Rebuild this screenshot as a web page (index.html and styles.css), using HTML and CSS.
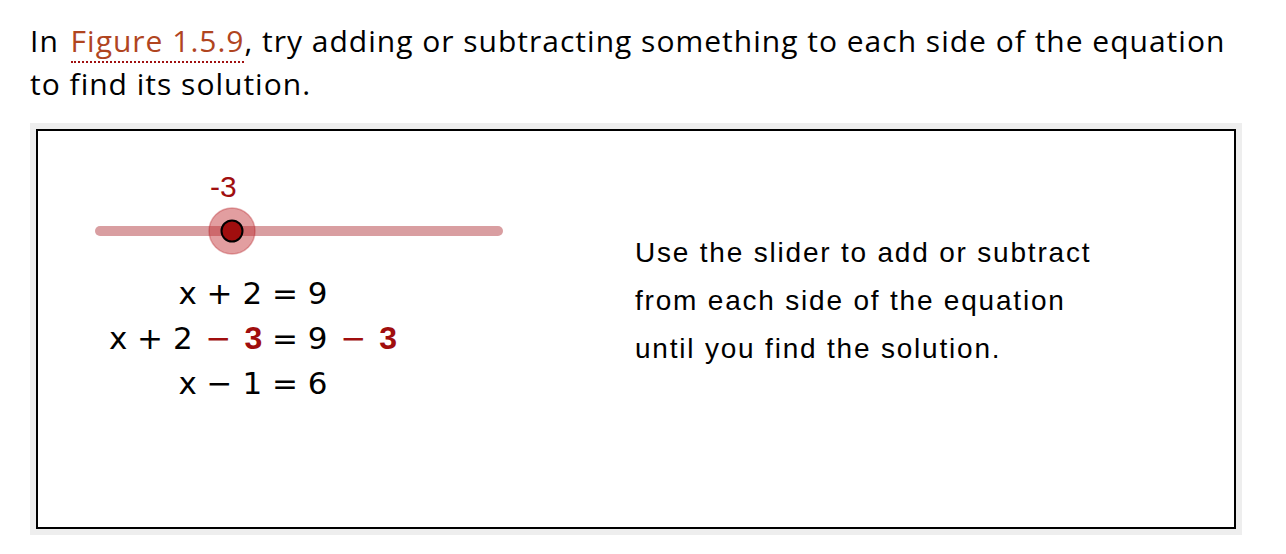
FILE: index.html
```html
<!DOCTYPE html>
<html lang="en">
<head>
  <meta charset="UTF-8" />
  <title>Figure 1.5.9</title>
  <link rel="stylesheet" href="styles.css">
</head>
<body>
  <p class="intro">
    In <a class="xref" href="#fig-1-5-9">Figure 1.5.9</a>, try adding or subtracting something to each side of the equation to find its solution.
  </p>

  <div class="figure" id="fig-1-5-9">
    <div class="applet">
      <div class="left">
        <svg class="slider" width="440" height="90" viewBox="0 0 440 90">
          <text x="172" y="26" class="slider-label">-3</text>
          <line x1="62" y1="60" x2="460" y2="60" class="track" />
          <circle cx="194" cy="60" r="23" class="halo" />
          <circle cx="194" cy="60" r="10.5" class="knob" />
        </svg>

        <div class="eqs">
          <div class="eq">x + 2 = 9</div>
          <div class="eq">x + 2 <span class="red op">&minus;</span> <b class="red">3</b> = 9 <span class="red op">&minus;</span> <b class="red">3</b></div>
          <div class="eq">x &minus; 1 = 6</div>
        </div>
      </div>

      <div class="right">
        Use the slider to add or subtract<br>
        from each side of the equation<br>
        until you find the solution.
      </div>
    </div>
  </div>
</body>
</html>
```

FILE: styles.css
```css
html, body {
  margin: 0;
  padding: 0;
  background: white;
  color: black;
}

body {
  padding: 19px 30px 0 30px;
  font-family: "Open Sans", sans-serif;
}

.intro {
  margin: 0 0 18px 0;
  font-size: 30px;
  letter-spacing: 1px;
  line-height: 43px;
  width: 1215px;
}

.xref {
  margin-left: 3px;
  color: #b0451f;
  text-decoration: none;
  border-bottom: 2px dotted #a01010;
}

.figure {
  width: 1200px;
  background: #eeeeee;
  padding: 6px;
}

.applet {
  height: 396px;
  border: 2px solid black;
  background: white;
  display: flex;
}

.left {
  width: 430px;
  flex: none;
  padding-top: 40px;
}

.slider {
  display: block;
  overflow: visible;
}

.slider-label {
  font-family: "Liberation Sans", Arial, sans-serif;
  font-size: 30px;
  fill: #a00e0e;
}

.track {
  stroke: #d99ea1;
  stroke-width: 10;
  stroke-linecap: round;
}

.halo {
  fill: rgba(190, 40, 45, 0.45);
  stroke: rgba(180, 30, 35, 0.35);
  stroke-width: 1.5;
}

.knob {
  fill: #a00e0e;
  stroke: black;
  stroke-width: 2;
}

.eqs {
  margin-top: 10px;
  text-align: center;
  font-family: "DejaVu Sans", sans-serif;
  font-size: 31px;
  line-height: 45px;
}

.red {
  color: #a00e0e;
}

.op {
  padding: 0 3px;
}

.eqs b {
  font-family: "Liberation Sans", sans-serif;
  font-size: 32px;
}

.right {
  padding: 98px 0 0 167px;
  font-family: "Liberation Sans", Arial, sans-serif;
  font-size: 28px;
  letter-spacing: 1.8px;
  line-height: 48px;
}
```
